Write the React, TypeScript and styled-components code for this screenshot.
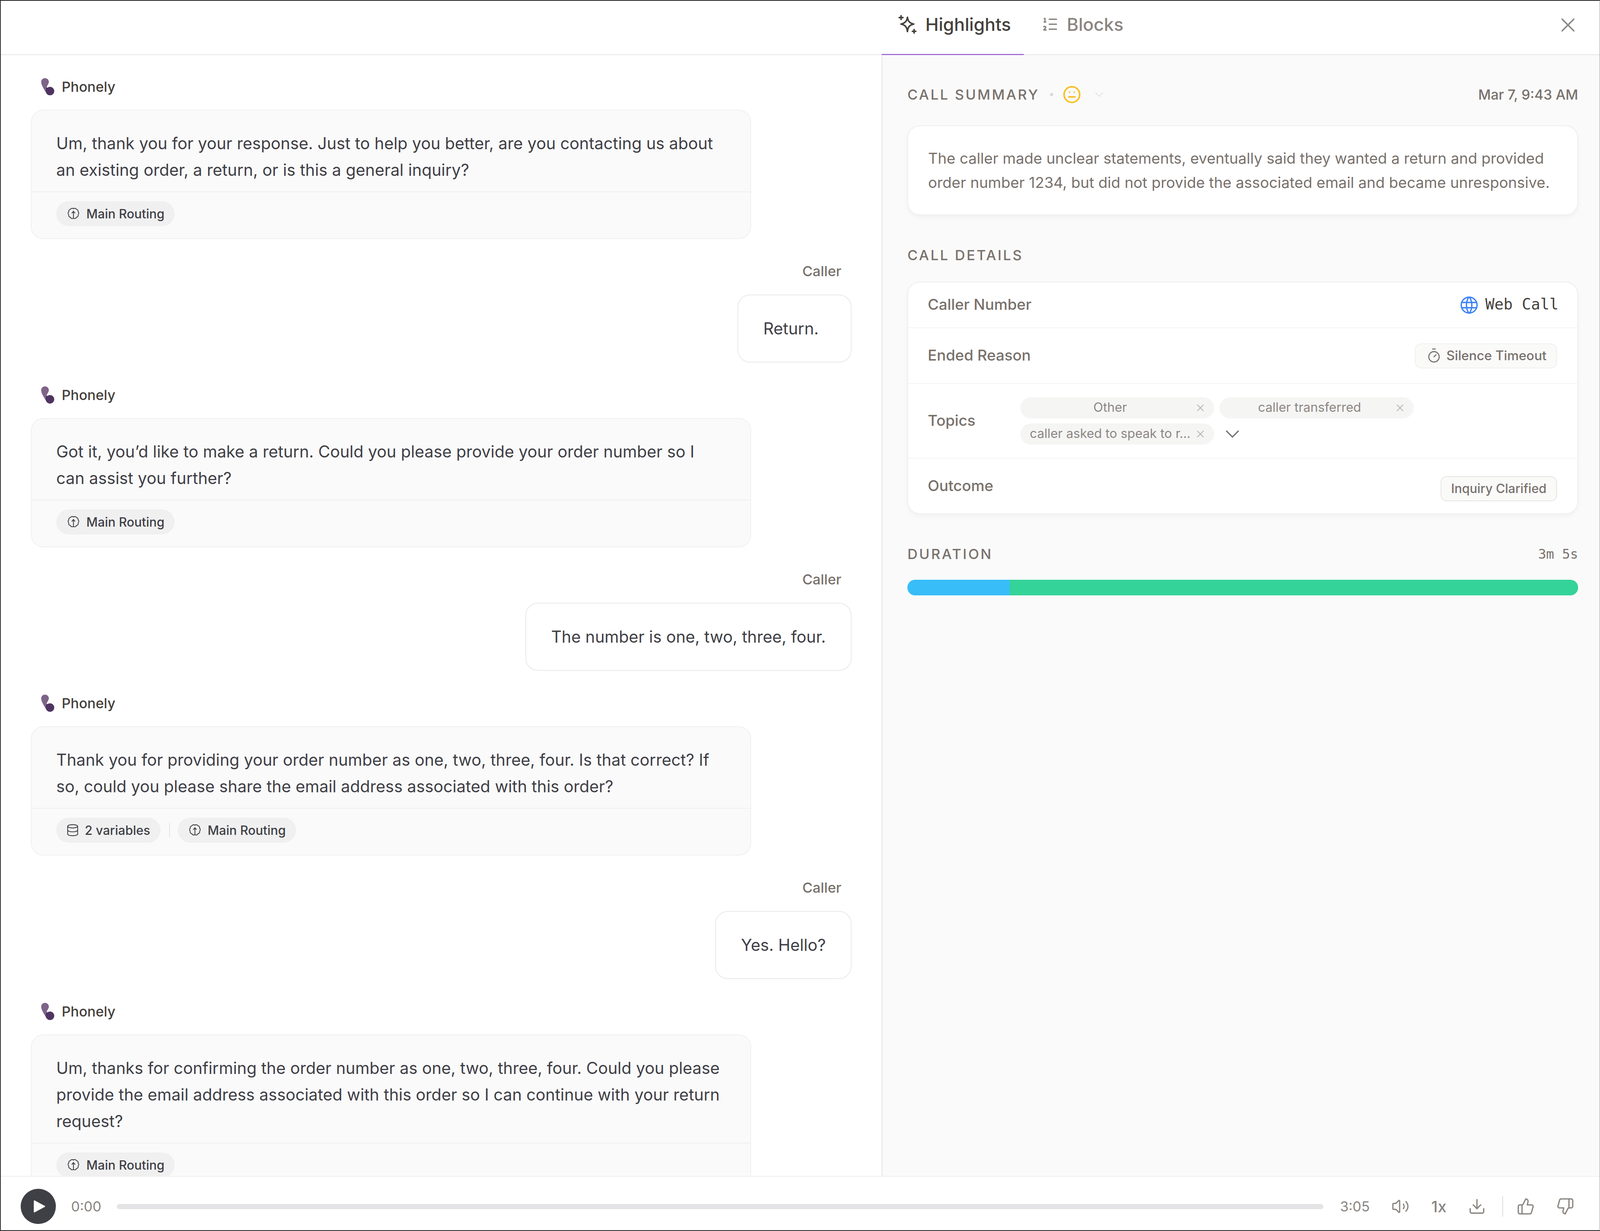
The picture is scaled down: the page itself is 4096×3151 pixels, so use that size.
import React from "react";
import styled, { createGlobalStyle } from "styled-components";
import {
  ChevronDown,
  Database,
  Download,
  ListOrdered,
  Meh,
  ThumbsDown,
  ThumbsUp,
  Timer,
  Volume2,
  X,
} from "lucide-react";

const GlobalStyle = createGlobalStyle`
  html, body {
    margin: 0;
    padding: 0;
    background: #fff;
  }
  * {
    box-sizing: border-box;
  }
`;

const Window = styled.div`
  width: 4096px;
  height: 3151px;
  display: flex;
  flex-direction: column;
  overflow: hidden;
  background: #fff;
  font-family: Inter, "Liberation Sans", sans-serif;
  border-top: 2px solid #1f1f1f;
  border-left: 2px solid #2e2e2e;
  border-bottom: 2px solid #1f1f1f;
  border-right: 1px solid #9a9a9a;
`;

const Header = styled.header`
  flex: 0 0 139px;
  min-height: 0;
  display: flex;
  padding-left: 2255px;
  border-bottom: 2px solid #e7e5e4;
`;

const Tab = styled.div<{ $active?: boolean }>`
  display: flex;
  align-items: center;
  gap: ${({ $active }) => ($active ? "21px" : "21px")};
  height: 140px;
  width: ${({ $active }) => ($active ? "364px" : "auto")};
  padding-left: ${({ $active }) => ($active ? "41px" : "45px")};
  padding-bottom: ${({ $active }) => ($active ? "16px" : "20px")};
  font-size: 45.5px;
  font-weight: 500;
  color: ${({ $active }) => ($active ? "#44403c" : "#8a8580")};
  border-bottom: ${({ $active }) => ($active ? "4px solid #a56fd6" : "0")};
  box-shadow: ${({ $active }) => ($active ? "0 2px 0 #e4d6ef" : "none")};
`;

const CloseButton = styled.div`
  margin-left: auto;
  margin-right: 51px;
  height: 124px;
  display: flex;
  align-items: center;
  color: #8a8580;
`;

const Body = styled.main`
  flex: 1;
  min-height: 0;
  display: flex;
`;

const Transcript = styled.section`
  flex: 0 0 2255px;
  overflow: hidden;
  padding: 53px 77px 0;
  display: flex;
  flex-direction: column;
  gap: 57px;
`;

const AgentMessage = styled.article`
  flex: none;
  display: flex;
  flex-direction: column;
  gap: 31px;
`;

const Speaker = styled.div`
  height: 56px;
  display: flex;
  align-items: center;
  gap: 19px;
  padding-left: 26px;
  font-size: 35.5px;
  font-weight: 500;
  color: #44403c;
`;

const AgentBubble = styled.div`
  flex: none;
  width: 1844px;
  background: #fafafa;
  border: 2px solid #f0f0f0;
  border-radius: 32px;
`;

const BubbleText = styled.p`
  margin: 0;
  padding: 50px 72px 21px 63px;
  font-size: 41.7px;
  line-height: 68px;
  color: #3f3f46;
`;

const BubbleMeta = styled.div`
  display: flex;
  align-items: center;
  height: 120px;
  padding: 0 63px 8px;
  border-top: 2px solid #efefef;
`;

const MetaChip = styled.span`
  height: 64px;
  display: inline-flex;
  align-items: center;
  gap: 14px;
  padding: 0 26px 0 25px;
  border-radius: 32px;
  background: #f0f0f0;
  font-size: 32px;
  font-weight: 500;
  color: #3f3f46;
`;

const MetaDivider = styled.span`
  width: 2px;
  height: 36px;
  margin: 0 20px 0 22px;
  background: #e2e2e2;
`;

const CallerMessage = styled.article`
  flex: none;
  display: flex;
  flex-direction: column;
  align-items: flex-end;
  gap: 35px;
  margin-bottom: -2px;
`;

const CallerName = styled.div`
  height: 50px;
  line-height: 50px;
  padding-right: 26px;
  font-size: 36px;
  font-weight: 500;
  color: #78716c;
`;

const CallerBubble = styled.div`
  min-width: 292px;
  height: 174px;
  display: flex;
  align-items: center;
  padding: 0 64px;
  background: #fff;
  border: 2px solid #e9e9e9;
  border-radius: 32px;
  font-size: 41.7px;
  color: #3f3f46;
`;

const Sidebar = styled.aside`
  flex: 1;
  min-width: 0;
  padding: 63px 55px 0 64px;
  background: #fafafa;
  border-left: 2px solid #e7e5e4;
`;

const SectionHead = styled.div<{ $gap?: number }>`
  display: flex;
  align-items: center;
  height: 76px;
  margin-bottom: ${({ $gap }) => $gap ?? 0}px;
`;

const SectionTitle = styled.h2`
  margin: 0;
  font-size: 36px;
  font-weight: 500;
  letter-spacing: 4px;
  color: #78716c;
`;

const Dot = styled.span`
  width: 8px;
  height: 8px;
  margin: 0 24px 0 27px;
  border-radius: 50%;
  background: #d9d7d5;
`;

const MoodCaret = styled.span`
  display: flex;
  margin-left: 28px;
  color: #e3e2e0;
`;

const SideNote = styled.span`
  margin-left: auto;
  font-size: 35.3px;
  font-weight: 500;
  color: #78716c;
`;

const MonoNote = styled.span`
  margin-left: auto;
  font-family: "DejaVu Sans Mono", "Liberation Mono", monospace;
  font-size: 34px;
  color: #78716c;
`;

const Card = styled.div`
  background: #fff;
  border: 2px solid #efeeec;
  border-radius: 32px;
  box-shadow: 0 6px 14px rgba(40, 30, 20, 0.035);
`;

const Summary = styled(Card)`
  height: 230px;
  display: flex;
  align-items: center;
  padding: 0 40px 0 51px;
  margin-bottom: 64px;
  font-size: 38.4px;
  line-height: 62px;
  color: #78716c;
`;

const DetailRow = styled.div<{ $height: number }>`
  height: ${({ $height }) => $height}px;
  display: flex;
  align-items: center;
  padding: 0 52px 0 50px;
  & + & {
    border-top: 2px solid #f4f4f3;
  }
`;

const DetailLabel = styled.span`
  flex: 0 0 237px;
  white-space: nowrap;
  padding-bottom: 3px;
  font-size: 38.6px;
  font-weight: 500;
  color: #78716c;
`;

const CallerValue = styled.span`
  margin-left: auto;
  margin-right: -4px;
  display: flex;
  align-items: center;
  gap: 14px;
  color: #3b82f6;
`;

const MonoValue = styled.span`
  padding-bottom: 4px;
  font-family: "DejaVu Sans Mono", "Liberation Mono", monospace;
  font-size: 39px;
  color: #44403c;
`;

const Pill = styled.span<{ $offset?: number; $strong?: boolean }>`
  margin-left: auto;
  margin-top: ${({ $offset }) => $offset ?? 0}px;
  height: 64px;
  display: inline-flex;
  align-items: center;
  gap: 12px;
  padding: 0 25px 2px ${({ $strong }) => ($strong ? "25px" : "27px")};
  background: #fafaf9;
  border: 2px solid ${({ $strong }) => ($strong ? "#e7e5e4" : "#f1f0ee")};
  border-radius: 16px;
  font-size: ${({ $strong }) => ($strong ? "32px" : "33.3px")};
  font-weight: 500;
  color: #78716c;
`;

const TopicList = styled.div`
  display: grid;
  grid-template-columns: 496px 497px;
  gap: 13px 14px;
`;

const TopicChip = styled.span`
  height: 54px;
  display: flex;
  align-items: center;
  gap: 6px;
  padding: 0 20px 0 20px;
  border-radius: 27px;
  background: #f5f5f4;
  color: #b5b2af;
`;

const TopicText = styled.span`
  flex: 1;
  min-width: 0;
  padding-bottom: 4px;
  text-align: center;
  white-space: nowrap;
  font-size: 32.5px;
  color: #8c8782;
`;

const TopicsToggle = styled.span`
  display: flex;
  align-items: center;
  height: 54px;
  margin-left: 3px;
  color: #78716c;
`;

const DurationHead = styled(SectionHead)`
  margin-top: 64px;
`;

const DurationBar = styled.div`
  display: flex;
  height: 40px;
  margin-top: 28px;
  border-radius: 20px;
  overflow: hidden;
  background: #34d399;
`;

const DurationFill = styled.div`
  background: #38bdf8;
`;

const Player = styled.footer`
  flex: 0 0 139px;
  display: flex;
  align-items: center;
  padding: 15px 65px 0 51px;
  background: #fff;
  border-top: 2px solid #efefee;
  font-size: 35.5px;
  color: #8a8580;
`;

const PlayButton = styled.div`
  flex: none;
  width: 90px;
  height: 90px;
  display: flex;
  align-items: center;
  justify-content: center;
  padding-left: 6px;
  border-radius: 50%;
  background: #3f3f46;
  margin-right: 39px;
`;

const Track = styled.div`
  flex: 1;
  height: 13px;
  margin: 0 42px 0 40px;
  border-radius: 7px;
  background: #e4e4e7;
`;

const PlayerTools = styled.div`
  display: flex;
  align-items: center;
  margin-left: 55px;
  gap: 55px;
`;

const SpeedLabel = styled.span`
  margin-left: 1.5px;
  font-size: 40px;
  font-weight: 500;
`;

const ToolDivider = styled.span`
  width: 2px;
  height: 52px;
  margin: 0 -20px 0 -13px;
  background: #dfdcd9;
`;

const PhonelyLogo = () => (
  <svg width="34" height="44" viewBox="0 0 113 150">
    <path
      d="M0 34C0 14 15 0 33 0c19 0 34 15 34 33 0 16-16 28-19 50l-2 48C25 98 0 60 0 34Z"
      fill="#7d6488"
    />
    <circle cx="77" cy="113" r="37" fill="#4f3462" />
    <path d="M48 82c4 1 8 2 12 0-13 6-20 18-19 38-3-13 2-28 7-38Z" fill="#2d1842" />
  </svg>
);

const HighlightsIcon = () => (
  <svg
    width="50"
    height="50"
    viewBox="0 0 24 24"
    fill="none"
    stroke="#44403c"
    strokeWidth="1.9"
    strokeLinejoin="round"
    strokeLinecap="round"
  >
    <path d="M12 3.5c.7 5 2.8 7.2 7.8 8.3-5 1.1-7.1 3.3-7.8 9.2-.7-5.9-2.9-8.1-8-9.2 5.1-1.1 7.3-3.3 8-8.3Z" />
    <path d="M4.2 1.5v4.6M1.9 3.8h4.6M20.2 18.6v4.2M18.1 20.7h4.2" />
  </svg>
);

const BrainIcon = () => (
  <svg
    width="38"
    height="38"
    viewBox="0 0 24 24"
    fill="none"
    stroke="currentColor"
    strokeWidth="1.3"
    strokeLinejoin="round"
    strokeLinecap="round"
  >
    <path d="M12 4C10.5 2.8 8 3 7 5 5 5.2 4 7 4.6 8.6 3 9.8 3 12.5 4.4 13.6 3.8 15.6 5 17.5 7 17.6 7.6 19.8 10.5 20.6 12 19 13.5 20.6 16.4 19.8 17 17.6 19 17.5 20.2 15.6 19.6 13.6 21 12.5 21 9.8 19.4 8.6 20 7 19 5.2 17 5 16 3 13.5 2.8 12 4Z" />
    <path d="M12 8v11M9.6 11 12 8l2.4 3" />
  </svg>
);

const GlobeIcon = () => (
  <svg
    width="54"
    height="54"
    viewBox="0 0 24 24"
    fill="none"
    stroke="currentColor"
    strokeWidth="1.5"
    strokeLinecap="round"
  >
    <circle cx="12" cy="12" r="9" />
    <path d="M3.6 9h16.8M3.6 15h16.8M11.5 3a17 17 0 0 0 0 18M12.5 3a17 17 0 0 1 0 18" />
  </svg>
);

const PlayGlyph = () => (
  <svg width="30" height="34" viewBox="0 0 30 34">
    <path d="M2 3l26 14L2 31Z" fill="#fff" stroke="#fff" strokeWidth="3" strokeLinejoin="round" />
  </svg>
);

type Chip = { kind: "vars" | "route"; label: string };

const Agent = ({ text, chips }: { text: string; chips: Chip[] }) => (
  <AgentMessage>
    <Speaker>
      <PhonelyLogo />
      Phonely
    </Speaker>
    <AgentBubble>
      <BubbleText>{text}</BubbleText>
      <BubbleMeta>
        {chips.map((chip, i) => (
          <React.Fragment key={chip.label}>
            {i > 0 && <MetaDivider />}
            <MetaChip>
              {chip.kind === "vars" ? <Database size={34} strokeWidth={1.5} /> : <BrainIcon />}
              {chip.label}
            </MetaChip>
          </React.Fragment>
        ))}
      </BubbleMeta>
    </AgentBubble>
  </AgentMessage>
);

const Caller = ({ text }: { text: string }) => (
  <CallerMessage>
    <CallerName>Caller</CallerName>
    <CallerBubble>{text}</CallerBubble>
  </CallerMessage>
);

const routing: Chip = { kind: "route", label: "Main Routing" };

const topics = ["Other", "caller transferred", "caller asked to speak to r..."];

const App = () => {
  return (
    <Window>
      <GlobalStyle />
      <Header>
        <Tab $active>
          <HighlightsIcon />
          Highlights
        </Tab>
        <Tab>
          <ListOrdered size={44} strokeWidth={1.9} />
          Blocks
        </Tab>
        <CloseButton>
          <X size={60} strokeWidth={1.5} />
        </CloseButton>
      </Header>

      <Body>
        <Transcript>
          <Agent
            text="Um, thank you for your response. Just to help you better, are you contacting us about an existing order, a return, or is this a general inquiry?"
            chips={[routing]}
          />
          <Caller text="Return." />
          <Agent
            text="Got it, you’d like to make a return. Could you please provide your order number so I can assist you further?"
            chips={[routing]}
          />
          <Caller text="The number is one, two, three, four." />
          <Agent
            text="Thank you for providing your order number as one, two, three, four. Is that correct? If so, could you please share the email address associated with this order?"
            chips={[{ kind: "vars", label: "2 variables" }, routing]}
          />
          <Caller text="Yes. Hello?" />
          <Agent
            text="Um, thanks for confirming the order number as one, two, three, four. Could you please provide the email address associated with this order so I can continue with your return request?"
            chips={[routing]}
          />
        </Transcript>

        <Sidebar>
          <SectionHead $gap={41}>
            <SectionTitle>CALL SUMMARY</SectionTitle>
            <Dot />
            <Meh size={48} strokeWidth={2} color="#fbbf24" />
            <MoodCaret>
              <ChevronDown size={36} strokeWidth={1.5} />
            </MoodCaret>
            <SideNote>Mar 7, 9:43 AM</SideNote>
          </SectionHead>
          <Summary>
            The caller made unclear statements, eventually said they wanted a return and provided
            order number 1234, but did not provide the associated email and became unresponsive.
          </Summary>

          <SectionHead $gap={30}>
            <SectionTitle>CALL DETAILS</SectionTitle>
          </SectionHead>
          <Card>
            <DetailRow $height={115}>
              <DetailLabel>Caller Number</DetailLabel>
              <CallerValue>
                <GlobeIcon />
                <MonoValue>Web Call</MonoValue>
              </CallerValue>
            </DetailRow>
            <DetailRow $height={143}>
              <DetailLabel>Ended Reason</DetailLabel>
              <Pill>
                <Timer size={40} strokeWidth={1.7} />
                Silence Timeout
              </Pill>
            </DetailRow>
            <DetailRow $height={191}>
              <DetailLabel>Topics</DetailLabel>
              <TopicList>
                {topics.map((topic) => (
                  <TopicChip key={topic}>
                    <TopicText>{topic}</TopicText>
                    <X size={30} strokeWidth={1.6} />
                  </TopicChip>
                ))}
                <TopicsToggle>
                  <ChevronDown size={60} strokeWidth={1.3} />
                </TopicsToggle>
              </TopicList>
            </DetailRow>
            <DetailRow $height={142}>
              <DetailLabel>Outcome</DetailLabel>
              <Pill $offset={14} $strong>
                Inquiry Clarified
              </Pill>
            </DetailRow>
          </Card>

          <DurationHead>
            <SectionTitle>DURATION</SectionTitle>
            <MonoNote>3m 5s</MonoNote>
          </DurationHead>
          <DurationBar>
            <DurationFill style={{ width: `${(262 / 1716) * 100}%` }} />
          </DurationBar>
        </Sidebar>
      </Body>

      <Player>
        <PlayButton>
          <PlayGlyph />
        </PlayButton>
        0:00
        <Track />
        3:05
        <PlayerTools>
          <Volume2 size={46} strokeWidth={1.7} />
          <SpeedLabel>1x</SpeedLabel>
          <Download size={46} strokeWidth={1.7} />
          <ToolDivider />
          <ThumbsUp size={46} strokeWidth={1.7} />
          <ThumbsDown size={46} strokeWidth={1.7} />
        </PlayerTools>
      </Player>
    </Window>
  );
};

export default App;
